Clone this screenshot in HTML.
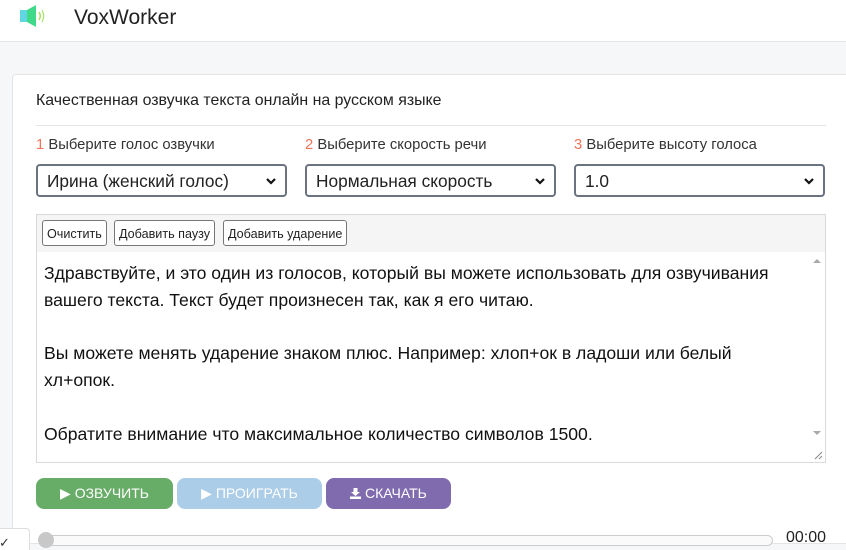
<!DOCTYPE html>
<html><head><meta charset="utf-8"><style>
*{box-sizing:border-box;margin:0;padding:0}
html,body{width:846px;height:550px;overflow:hidden}
body{background:#f6f7f8;font-family:"Liberation Sans",sans-serif;color:#222;position:relative}
.hdr{position:absolute;left:0;top:0;width:846px;height:42px;background:#fff;border-bottom:1px solid #e6e6e6}
.brand{position:absolute;left:74px;top:6px;font-size:21px;color:#222}
.card{position:absolute;left:12px;top:74px;width:850px;height:470px;background:#fff;border:1px solid #e4e4e4;border-radius:4px}
.a{position:absolute}
.title{left:36px;top:92px;font-size:15.9px}
.hr{left:36px;top:125px;width:790px;height:1px;background:#e5e5e5}
.lbl{top:137px;font-size:14.8px;color:#333}
.lbl span{color:#f0735a}
.sel{top:164px;width:251px;height:33px;border:2px solid #6b7280;border-radius:4px;font-size:17.3px;padding:5px 0 0 9px;background:#fff}
.sel svg{position:absolute;right:8px;top:11px}
.ed{left:36px;top:214px;width:790px;height:249px;border:1px solid #d9d9d9;background:#f5f5f5}
.tb{top:220px;height:26px;border:1px solid #777;border-radius:3px;background:#fff;font-size:12.6px;padding:6px 4px 0}
.ta{left:37px;top:252px;width:772px;height:210px;background:#fff;font-size:17.6px;line-height:26.8px;padding:8px 0 0 7px;color:#111}
.sb{left:809px;top:252px;width:16px;height:210px;background:#fff}
.btn{top:478px;height:31px;border-radius:8px;color:#fff;font-size:14px;text-align:center;padding-top:7px}
</style></head><body>
<div class="hdr">
<svg class="a" style="left:19px;top:4px" width="32" height="24" viewBox="0 0 32 24"><rect x="1" y="6" width="8" height="12" fill="#5fd6e0"/><path d="M8 6 L17 1 V23 L8 18Z" fill="#3fd98a"/><path d="M20 8 Q22.5 12 20 16" stroke="#a6e36a" stroke-width="1.5" fill="none"/><path d="M23 6 Q26.5 12 23 18" stroke="#a6e36a" stroke-width="1.2" fill="none"/></svg>
<div class="brand">VoxWorker</div>
</div>
<div class="card"></div>
<div class="a title">Качественная озвучка текста онлайн на русском языке</div>
<div class="a hr"></div>
<div class="a lbl" style="left:36px"><span>1</span> Выберите голос озвучки</div>
<div class="a lbl" style="left:305px"><span>2</span> Выберите скорость речи</div>
<div class="a lbl" style="left:574px"><span>3</span> Выберите высоту голоса</div>
<div class="a sel" style="left:36px">Ирина (женский голос)<svg width="12" height="8" viewBox="0 0 12 8"><path d="M2 2 L6 6 L10 2" stroke="#111" stroke-width="2.2" fill="none"/></svg></div>
<div class="a sel" style="left:305px">Нормальная скорость<svg width="12" height="8" viewBox="0 0 12 8"><path d="M2 2 L6 6 L10 2" stroke="#111" stroke-width="2.2" fill="none"/></svg></div>
<div class="a sel" style="left:574px">1.0<svg width="12" height="8" viewBox="0 0 12 8"><path d="M2 2 L6 6 L10 2" stroke="#111" stroke-width="2.2" fill="none"/></svg></div>
<div class="a ed"></div>
<div class="a tb" style="left:42px">Очистить</div>
<div class="a tb" style="left:114px">Добавить паузу</div>
<div class="a tb" style="left:223px">Добавить ударение</div>
<div class="a ta">Здравствуйте, и это один из голосов, который вы можете использовать для озвучивания<br>вашего текста. Текст будет произнесен так, как я его читаю.<br><br>Вы можете менять ударение знаком плюс. Например: хлоп+ок в ладоши или белый<br>хл+опок.<br><br>Обратите внимание что максимальное количество символов 1500.</div>
<div class="a sb"><svg class="a" style="left:4px;top:6px" width="8" height="6"><path d="M0 5 L4 1 L8 5Z" fill="#aaa"/></svg><svg class="a" style="left:4px;top:178px" width="8" height="6"><path d="M0 1 L4 5 L8 1Z" fill="#aaa"/></svg><svg class="a" style="left:4px;top:198px" width="10" height="10"><path d="M9 2 L2 9 M9 6 L6 9" stroke="#888"/></svg></div>
<div class="a btn" style="left:36px;width:137px;background:#67ac67">▶ ОЗВУЧИТЬ</div>
<div class="a btn" style="left:177px;width:145px;background:#abcde8">▶ ПРОИГРАТЬ</div>
<div class="a btn" style="left:326px;width:125px;background:#7f6bad"><svg width="11" height="11" viewBox="0 0 11 11" style="vertical-align:-1px"><path d="M3.5 0h4v4h2.5L5.5 8 1 4h2.5z" fill="#fff"/><rect x="0" y="8.5" width="11" height="2.5" fill="#fff"/></svg> СКАЧАТЬ</div>
<div class="a" style="left:40px;top:535px;width:733px;height:11px;border:1px solid #ccc;border-radius:6px;background:#fafafa"></div>
<div class="a" style="left:38px;top:532px;width:16px;height:16px;border-radius:50%;background:#c8c8c8"></div>
<div class="a" style="left:786px;top:529px;font-size:16px;color:#222">00:00</div>
<div class="a" style="left:-4px;top:528px;width:34px;height:26px;background:#fff;border:1px solid #ddd;border-radius:4px;font-size:13px;padding:6px 0 0 2px;color:#333">✓</div>
</body></html>
